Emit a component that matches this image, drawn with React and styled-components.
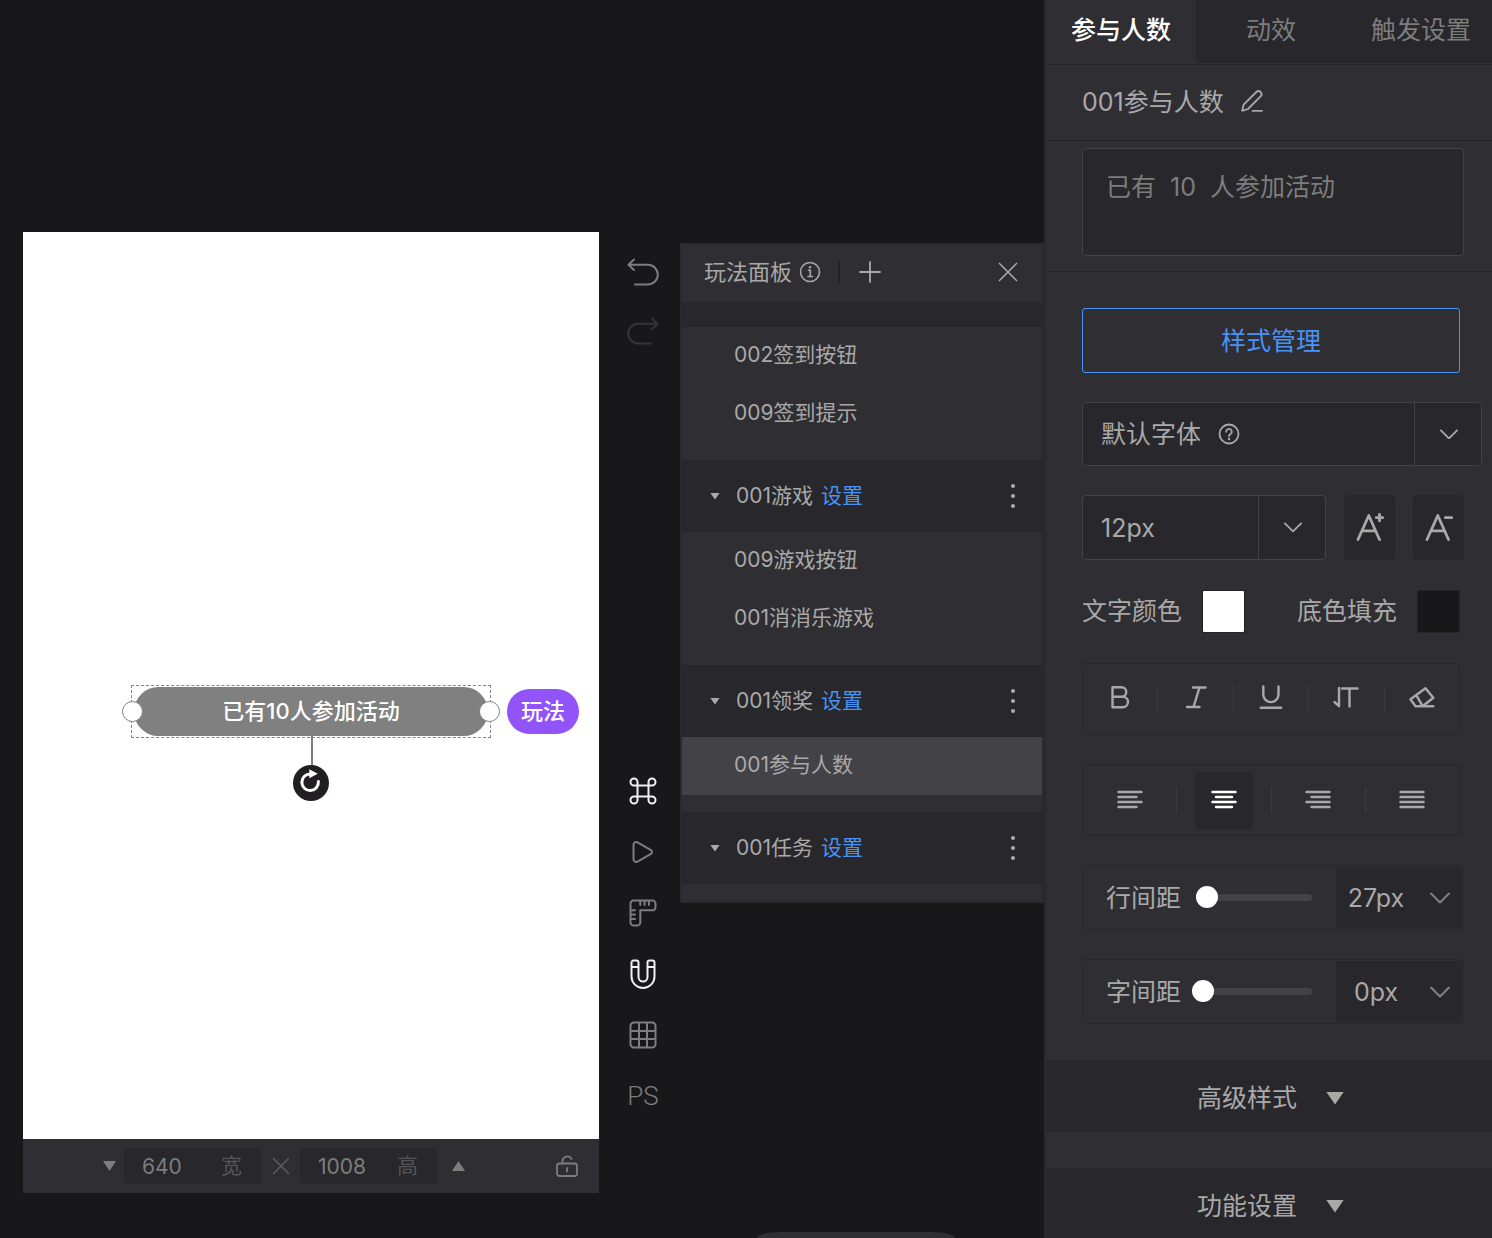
import { useState } from "react";
import styled, { createGlobalStyle, ThemeProvider } from "styled-components";

const theme = {
  bg: "#18181a",
  panel: "#2f2e33",
  panelDark: "#28272b",
  edge: "#2a292d",
  line: "#232226",
  border: "#434247",
  active: "#434247",
  text: "#a9a9a9",
  muted: "#7d7d7d",
  dim: "#555457",
  blue: "#4893f5",
  purple: "#9254f8",
};

const GlobalStyle = createGlobalStyle`
  *, *::before, *::after {
    box-sizing: border-box;
  }

  body {
    margin: 0;
    background: ${theme.bg};
  }

  body, button, input, select, textarea {
    font-family: Inter, "Noto Sans CJK SC", sans-serif;
  }

  button {
    padding: 0;
    border: 0;
    background: none;
    color: inherit;
    cursor: pointer;
  }

  h2, h3, p, ul {
    margin: 0;
    padding: 0;
    font-weight: 400;
    list-style: none;
  }
`;

const Page = styled.div`
  display: grid;
  grid-template-columns: minmax(0, 1fr) 448px;
  height: 100vh;
  overflow: hidden;
  color: ${({ theme }) => theme.text};
`;

// icons

const StrokeIcon = styled.svg`
  display: block;
  flex: none;
  fill: none;
  stroke: currentColor;
  stroke-width: ${({ $weight }) => $weight || 2};
  stroke-linecap: round;
  stroke-linejoin: round;

  .solid {
    fill: currentColor;
    stroke: none;
  }
`;

const Icon = ({ w = 28, h = w, weight, children }) => (
  <StrokeIcon
    width={w}
    height={h}
    viewBox={`0 0 ${w} ${h}`}
    $weight={weight}
    aria-hidden="true"
  >
    {children}
  </StrokeIcon>
);

const Chevron = ({ w = 18 }) => (
  <StrokeIcon width={w} height={w * 0.6} viewBox="0 0 20 12" aria-hidden="true">
    <path d="M1 1.5 10 10.5 19 1.5" />
  </StrokeIcon>
);

const Triangle = styled.span`
  flex: none;
  width: ${({ $w }) => $w}px;
  height: ${({ $h }) => $h}px;
  background: currentColor;
  clip-path: ${({ $up }) =>
    $up
      ? "polygon(50% 0, 100% 100%, 0 100%)"
      : "polygon(0 0, 100% 0, 50% 100%)"};
`;

// workspace

const Workspace = styled.main`
  position: relative;
  display: grid;
  grid-template-columns: minmax(0, 1fr) 81px 364px;
  padding: 232px 0 45px 23px;
  overflow: hidden;
`;

const Stage = styled.section`
  display: flex;
  flex-direction: column;
`;

const Canvas = styled.div`
  position: relative;
  flex: 1;
  background: #fff;
`;

const Selection = styled.div`
  position: absolute;
  top: 453px;
  left: 108px;
  width: 360px;
  height: 53px;
  padding: 1px;
  border: 1px dashed #858585;
`;

const CountPill = styled.p`
  height: 49px;
  margin: 0 1px;
  border-radius: 25px;
  background: #808080;
  color: #fff;
  font-size: 22px;
  font-weight: 500;
  line-height: 49px;
  text-align: center;
`;

const Handle = styled.span`
  position: absolute;
  top: 15px;
  ${({ $side }) => $side}: -10px;
  width: 21px;
  height: 21px;
  border: 1px solid #808080;
  border-radius: 50%;
  background: #fff;
`;

const Stem = styled.span`
  position: absolute;
  top: 50px;
  left: 179px;
  width: 2px;
  height: 32px;
  background: #808080;
`;

const Rotate = styled.button`
  position: absolute;
  top: 79px;
  left: 161px;
  width: 36px;
  height: 36px;
  border-radius: 50%;
  background: #221f22;
  color: #fff;
`;

const Tag = styled.span`
  position: absolute;
  top: 3px;
  left: 375px;
  width: 72px;
  height: 45px;
  border-radius: 23px;
  background: ${({ theme }) => theme.purple};
  color: #fff;
  font-size: 22px;
  font-weight: 500;
  line-height: 44px;
  text-align: center;
`;

const SizeBar = styled.div`
  display: flex;
  align-items: center;
  height: 54px;
  padding: 0 21px 0 80px;
  background: ${({ theme }) => theme.panel};
  color: ${({ theme }) => theme.muted};

  > button:last-child {
    margin-left: auto;
  }
`;

const StepButton = styled.button`
  display: flex;
  width: 13px;
  margin-right: ${({ $up }) => ($up ? 0 : 8)}px;
  margin-left: ${({ $up }) => ($up ? 15 : 0)}px;
`;

const Times = styled.span`
  display: grid;
  place-items: center;
  width: 39px;
  color: #5c5c60;
`;

const SizeField = styled.label`
  display: flex;
  align-items: center;
  width: 137px;
  height: 36px;
  padding: 0 19px 0 18px;
  border-radius: 4px;
  background: ${({ theme }) => theme.panelDark};
  font-size: 21px;

  input {
    flex: 1;
    min-width: 0;
    padding: 0;
    border: 0;
    background: none;
    color: inherit;
    font-size: 21px;
  }

  span {
    color: ${({ theme }) => theme.dim};
    line-height: 36px;
  }
`;

const Rail = styled.nav`
  display: flex;
  flex-direction: column;
  justify-content: space-between;
  align-items: center;
  padding: 10px 0 67px 7px;
`;

const RailGroup = styled.div`
  display: flex;
  flex-direction: column;
`;

const RailButton = styled.button`
  display: grid;
  place-items: center;
  width: 48px;
  height: ${({ $short }) => ($short ? 59 : 61)}px;
  color: ${({ theme, $state }) =>
    ({ on: "#f0f0f0", off: "#353535" })[$state] || theme.muted};
  font-family: Roboto, sans-serif;
  font-size: 26px;
  font-weight: 300;
`;

const BottomDrawer = styled.div`
  position: absolute;
  bottom: 0;
  left: 757px;
  width: 198px;
  height: 6px;
  border-radius: 24px 24px 0 0 / 6px 6px 0 0;
  background: ${({ theme }) => theme.panel};
`;

// play panel

const PlayPanel = styled.section`
  align-self: start;
  margin-top: 11px;
  border: 2px solid ${({ theme }) => theme.edge};
  background: ${({ theme }) => theme.panel};
`;

const PlayHeader = styled.header`
  display: flex;
  align-items: center;
  height: 57px;
  padding: 0 24px 3px 22px;

  h2 {
    margin-right: 7px;
    font-size: 22px;
    line-height: 54px;
  }

  > button:last-child {
    margin-left: auto;
  }
`;

const HeaderRule = styled.span`
  width: 2px;
  height: 22px;
  margin: 0 19px 0 17px;
  background: ${({ theme }) => theme.line};
`;

const Strip = styled.div`
  height: 25px;
  background: ${({ theme }) => theme.panelDark};
`;

const GroupHeader = styled.div`
  display: flex;
  align-items: center;
  height: 72px;
  padding: 0 24px 0 28px;
  background: ${({ theme }) => theme.panelDark};
  font-size: 21px;
  line-height: 72px;

  h3 {
    margin: 0 8px 0 16px;
    font-size: 21px;
  }

  a {
    color: ${({ theme }) => theme.blue};
    text-decoration: none;
  }

  > button:last-child {
    margin-left: auto;
  }
`;

const ItemList = styled.ul`
  padding-bottom: 17px;
`;

const Item = styled.button`
  display: block;
  width: 100%;
  height: 58px;
  padding: 0 0 2px 52px;
  background: ${({ theme, $active }) => ($active ? theme.active : "none")};
  font-size: 21px;
  line-height: 56px;
  text-align: left;
`;

// inspector

const Inspector = styled.aside`
  border-left: 2px solid ${({ theme }) => theme.edge};
  background: ${({ theme }) => theme.panel};
  font-size: 25px;
  overflow: hidden auto;
  scrollbar-width: none;
`;

const Tabs = styled.div`
  display: flex;
  height: 65px;
  padding-bottom: 1px;
  border-bottom: 1px solid ${({ theme }) => theme.line};
`;

const Tab = styled.button`
  flex: 0 0 150px;
  padding-bottom: 8px;
  background: ${({ theme, $active }) =>
    $active ? theme.panel : theme.panelDark};
  color: ${({ theme, $active }) => ($active ? "#fff" : theme.muted)};
  font-size: 25px;
  font-weight: ${({ $active }) => ($active ? 500 : 400)};
`;

const NameRow = styled.div`
  display: flex;
  align-items: center;
  height: 76px;
  padding: 0 28px 4px 36px;
  border-bottom: 1px solid ${({ theme }) => theme.line};

  h2 {
    margin-right: 17px;
    padding-bottom: 2px;
    font-size: 25px;
  }
`;

const TextRow = styled.div`
  padding: 7px 28px 15px 36px;
  border-bottom: 1px solid ${({ theme }) => theme.line};

  textarea {
    display: block;
    width: 100%;
    height: 108px;
    padding: 19px 23px;
    border: 1px solid ${({ theme }) => theme.border};
    border-radius: 4px;
    background: ${({ theme }) => theme.panelDark};
    color: ${({ theme }) => theme.muted};
    font-size: 25px;
    line-height: 38px;
    resize: none;
  }
`;

const StyleForm = styled.div`
  display: flex;
  flex-direction: column;
  gap: 29px;
  padding: 36px 32px 36px 36px;
`;

const ManageButton = styled.button`
  height: 65px;
  padding-bottom: 4px;
  border: 1px solid ${({ theme }) => theme.blue};
  border-radius: 3px;
  color: ${({ theme }) => theme.blue};
  font-size: 25px;
`;

const SelectBox = styled.div`
  position: relative;
  flex: 1;

  select {
    width: 100%;
    height: 100%;
    padding: 0 68px 0 18px;
    border: 1px solid ${({ theme }) => theme.border};
    border-radius: 4px;
    appearance: none;
    background: ${({ theme }) => theme.panelDark};
    color: inherit;
    font-size: 25px;
  }
`;

const SelectArrow = styled.span`
  position: absolute;
  inset: 1px 0 1px auto;
  display: grid;
  place-items: center;
  width: 68px;
  border-left: 1px solid ${({ theme }) => theme.border};
  pointer-events: none;
`;

// wider than its siblings on the right
const FontRow = styled.div`
  display: flex;
  height: 64px;
  margin-right: -22px;
`;

const HelpButton = styled.button`
  position: absolute;
  top: 21px;
  left: 136px;
`;

const SizeRow = styled.div`
  display: flex;
  gap: 18px;
  height: 65px;
  margin-right: -4px;
`;

const FontStep = styled.button`
  display: grid;
  place-items: center;
  width: 51px;
  padding-bottom: 2px;
  border-radius: 4px;
  background: ${({ theme }) => theme.panelDark};
`;

const ColorRow = styled.div`
  display: flex;
  justify-content: space-between;
`;

const ColorField = styled.label`
  display: flex;
  align-items: center;
  gap: 20px;
  line-height: 45px;

  input {
    width: 43px;
    height: 43px;
    padding: 0;
    border: 1px solid ${({ theme }) => theme.line};
    border-radius: 2px;
    appearance: none;
    background: none;
  }

  input::-webkit-color-swatch-wrapper {
    padding: 0;
  }

  input::-webkit-color-swatch {
    border: 0;
  }
`;

const ButtonBar = styled.div`
  display: flex;
  align-items: center;
  height: 72px;
  border: 1px solid ${({ theme }) => theme.panelDark};
  border-radius: 4px;
`;

const BarCell = styled.div`
  display: grid;
  flex: 1;
  place-items: center;
  height: 28px;

  & + & {
    border-left: 1px solid #3a393e;
  }
`;

const BarButton = styled.button`
  display: grid;
  place-items: center;
  width: 58px;
  height: 57px;
  margin: -15px 0;
  padding-bottom: 2px;
  background: ${({ theme, $active }) => ($active ? theme.panelDark : "none")};
  color: ${({ $active }) => ($active ? "#fff" : "inherit")};
`;

const SpacingRow = styled.div`
  display: flex;
  align-items: center;
  height: 65px;
  margin-right: -4px;
  padding: 0 1px 0 23px;
  border: 1px solid ${({ theme }) => theme.panelDark};
  border-radius: 4px;

  label {
    flex: none;
    margin-right: 11px;
    padding-bottom: 3px;
  }
`;

const Range = styled.input`
  flex: 1;
  min-width: 0;
  height: 22px;
  margin: 0 24px 0 0;
  appearance: none;
  background: none;

  &::-webkit-slider-runnable-track {
    height: 7px;
    border-radius: 4px;
    background: linear-gradient(to right, transparent 11px, #434247 11px);
  }

  &::-webkit-slider-thumb {
    width: 22px;
    height: 22px;
    margin-top: -8px;
    border-radius: 50%;
    appearance: none;
    background: #fff;
  }
`;

const UnitSelect = styled.div`
  position: relative;
  flex: none;
  width: 126px;
  height: 61px;

  select {
    width: 100%;
    height: 100%;
    padding: 0 46px 0 0;
    border: 0;
    border-radius: 2px;
    appearance: none;
    background: ${({ theme }) => theme.panelDark};
    color: inherit;
    font-size: 25px;
    text-align: center;
    text-align-last: center;
  }

  svg {
    position: absolute;
    top: 25px;
    right: 12px;
    opacity: 0.7;
    pointer-events: none;
  }
`;

const Fold = styled.button`
  display: flex;
  align-items: center;
  justify-content: center;
  gap: 29px;
  width: 100%;
  height: 72px;
  margin-bottom: 36px;
  padding-left: 3px;
  background: ${({ theme }) => theme.panelDark};
  font-size: 25px;

  &:last-child {
    margin-bottom: 0;
  }

  span {
    margin-top: 4px;
  }
`;

const tools = [
  {
    label: "组件",
    state: "on",
    icon: (
      <path d="M19.5 5v18a3.5 3.5 0 1 0 3.5-3.5H5A3.5 3.5 0 1 0 8.5 23V5A3.5 3.5 0 1 0 5 8.5h18A3.5 3.5 0 1 0 19.5 5z" />
    ),
  },
  {
    label: "预览",
    icon: (
      <path d="M4.5 7v14c0 2.6 2.3 3.6 4.5 2.4l12.6-7.3c1.9-1.1 1.9-3.1 0-4.2L9 4.6C6.8 3.4 4.5 4.4 4.5 7z" />
    ),
  },
  {
    label: "标尺",
    icon: (
      <>
        <path d="M4.5 1.5h19a3 3 0 0 1 3 3v3.8a3 3 0 0 1-3 3H11.3v12.2a3 3 0 0 1-3 3H4.5a3 3 0 0 1-3-3v-19a3 3 0 0 1 3-3z" />
        <path d="M11.3 2v4M15.6 2v4M19.9 2v4M2 11.3h4M2 15.6h4M2 19.9h4" />
      </>
    ),
  },
  {
    label: "吸附",
    state: "on",
    height: 30,
    icon: (
      <path d="M2.5 3.5a2 2 0 0 1 2-2h3a2 2 0 0 1 2 2V18a4.5 4.5 0 0 0 9 0V3.5a2 2 0 0 1 2-2h3a2 2 0 0 1 2 2v14a11.5 11.5 0 0 1-23 0zM2.5 8h7M18.5 8h7" />
    ),
  },
  {
    label: "网格",
    icon: (
      <>
        <rect x="1.5" y="1.5" width="25" height="25" rx="3.5" />
        <path d="M10 2v24M18 2v24M2 10h24M2 18h24" />
      </>
    ),
  },
];

const groups = [
  { title: "001游戏", items: ["009游戏按钮", "001消消乐游戏"] },
  { title: "001领奖", items: ["001参与人数"] },
  { title: "001任务", items: [] },
];

const textStyles = [
  {
    label: "加粗",
    d: "M5.5 2.2h9a4.8 4.8 0 0 1 0 9.6h-9zM5.5 11.8h10.3a5.2 5.2 0 0 1 0 10.4H5.5z",
  },
  { label: "斜体", d: "M10 2.5h12.5M4 22h12.5M16.5 2.5l-6 19.5" },
  {
    label: "下划线",
    d: "M5.3 1.5v8a7.6 7.6 0 0 0 15.2 0v-8M2.8 22.7h20.4",
  },
  { label: "竖排", d: "M6 3v18.2L1.5 17M9 3.5h15.5M16.5 3.5v18" },
  {
    label: "清除格式",
    d: "M1.5 14.2 16.5 3.2l7.8 9.6-10.6 8.5H6.5zM7.3 10.2l6.4 11.1h10.6",
  },
];

const alignments = [
  { label: "左对齐", d: "M1.5 2h23M1.5 7h18M1.5 12h23M1.5 17h18" },
  { label: "居中", d: "M1.5 2h23M5 7h16M1.5 12h23M5 17h16" },
  { label: "右对齐", d: "M1.5 2h23M6.5 7h18M1.5 12h23M6.5 17h18" },
  { label: "两端对齐", d: "M1.5 2h23M1.5 7h23M1.5 12h23M1.5 17h23" },
];

const StageArea = () => (
  <Stage>
    <Canvas>
      <Selection>
        <CountPill>已有10人参加活动</CountPill>
        <Stem />
        <Handle $side="left" />
        <Handle $side="right" />
        <Rotate aria-label="旋转">
          <Icon w={36} weight={3}>
            <path d="M25.4 16.5a8.3 8.3 0 1 1-8-7.6" />
            <path className="solid" d="M16.3 4.3 24.7 8.7l-8.4 4.6z" />
          </Icon>
        </Rotate>
        <Tag>玩法</Tag>
      </Selection>
    </Canvas>
    <SizeBar>
      <StepButton aria-label="减小">
        <Triangle $w={13} $h={10} />
      </StepButton>
      <SizeField>
        <input defaultValue="640" />
        <span>宽</span>
      </SizeField>
      <Times>
        <Icon w={18} weight={1.5}>
          <path d="M1.5 1.5l15 15M16.5 1.5l-15 15" />
        </Icon>
      </Times>
      <SizeField>
        <input defaultValue="1008" />
        <span>高</span>
      </SizeField>
      <StepButton $up aria-label="增大">
        <Triangle $w={13} $h={10} $up />
      </StepButton>
      <button aria-label="锁定比例">
        <Icon w={22} h={22} weight={1.8}>
          <rect x="1" y="8.5" width="20" height="12.5" rx="2.5" />
          <path d="M6.5 8.5V6a4.8 4.8 0 0 1 9-2M11 13v3.5" />
        </Icon>
      </button>
    </SizeBar>
  </Stage>
);

const ToolRail = () => (
  <Rail>
    <RailGroup>
      <RailButton $short aria-label="撤销">
        <Icon w={32} h={28}>
          <path d="M7 1.5 1.5 6.8 7 12M1.5 6.8H21a9.7 9.7 0 0 1 0 19.6H8" />
        </Icon>
      </RailButton>
      <RailButton $short $state="off" aria-label="重做">
        <Icon w={32} h={28}>
          <path d="M25 1.5l5.5 5.3L25 12M30.5 6.8H11a9.7 9.7 0 0 0 0 19.6h13" />
        </Icon>
      </RailButton>
    </RailGroup>
    <RailGroup>
      {tools.map(({ label, state, height, icon }) => (
        <RailButton key={label} $state={state} aria-label={label}>
          <Icon w={28} h={height}>
            {icon}
          </Icon>
        </RailButton>
      ))}
      <RailButton>PS</RailButton>
    </RailGroup>
  </Rail>
);

const Items = ({ items, selected, onSelect }) => (
  <ItemList>
    {items.map((item) => (
      <li key={item}>
        <Item $active={item === selected} onClick={() => onSelect(item)}>
          {item}
        </Item>
      </li>
    ))}
  </ItemList>
);

const Plays = () => {
  const [selected, setSelected] = useState("001参与人数");

  return (
    <PlayPanel>
      <PlayHeader>
        <h2>玩法面板</h2>
        <button aria-label="说明">
          <Icon w={22} weight={1.6}>
            <circle cx="11" cy="11" r="9.5" />
            <path d="M9.5 9.3h1.8v6M9 15.5h4.5" />
            <circle className="solid" cx="11" cy="6.3" r="1.2" />
          </Icon>
        </button>
        <HeaderRule />
        <button aria-label="添加">
          <Icon w={22} weight={1.8}>
            <path d="M11 1v20M1 11h20" />
          </Icon>
        </button>
        <button aria-label="关闭">
          <Icon w={20} weight={1.6}>
            <path d="M1.5 1.5l17 17M18.5 1.5l-17 17" />
          </Icon>
        </button>
      </PlayHeader>
      <Strip />
      <Items
        items={["002签到按钮", "009签到提示"]}
        selected={selected}
        onSelect={setSelected}
      />
      {groups.map(({ title, items }) => (
        <div key={title}>
          <GroupHeader>
            <Triangle $w={10} $h={7} />
            <h3>{title}</h3>
            <a href="#settings">设置</a>
            <button aria-label="更多">
              <Icon w={10} h={26}>
                <circle className="solid" cx="5" cy="3" r="2.1" />
                <circle className="solid" cx="5" cy="13" r="2.1" />
                <circle className="solid" cx="5" cy="23" r="2.1" />
              </Icon>
            </button>
          </GroupHeader>
          <Items items={items} selected={selected} onSelect={setSelected} />
        </div>
      ))}
    </PlayPanel>
  );
};

const Spacing = ({ id, label, value, unit }) => (
  <SpacingRow>
    <label htmlFor={id}>{label}</label>
    <Range id={id} type="range" min="0" max="100" defaultValue={value} />
    <UnitSelect>
      <select aria-label={label}>
        <option>{unit}</option>
      </select>
      <Chevron w={20} />
    </UnitSelect>
  </SpacingRow>
);

const Properties = () => {
  const [align, setAlign] = useState("居中");

  return (
    <Inspector>
      <Tabs>
        <Tab $active>参与人数</Tab>
        <Tab>动效</Tab>
        <Tab>触发设置</Tab>
      </Tabs>
      <NameRow>
        <h2>001参与人数</h2>
        <button aria-label="重命名">
          <Icon w={22} weight={1.8}>
            <path d="M1.2 20.8 2.6 14.6 15.4 2a3 3 0 0 1 4.2 4.3L7 19zM11.5 20.8H21" />
          </Icon>
        </button>
      </NameRow>
      <TextRow>
        <textarea aria-label="文案" defaultValue="已有  10  人参加活动" />
      </TextRow>
      <StyleForm>
        <ManageButton>样式管理</ManageButton>
        <FontRow>
          <SelectBox>
            <select aria-label="字体">
              <option>默认字体</option>
            </select>
            <HelpButton aria-label="字体说明">
              <Icon w={22} weight={1.8}>
                <circle cx="11" cy="11" r="9.5" />
                <path d="M8.2 8.7a2.8 2.8 0 1 1 4.3 2.4c-1 .6-1.5 1-1.5 2.1" />
                <circle className="solid" cx="11" cy="16" r="1.2" />
              </Icon>
            </HelpButton>
            <SelectArrow>
              <Chevron />
            </SelectArrow>
          </SelectBox>
        </FontRow>
        <SizeRow>
          <SelectBox>
            <select aria-label="字号">
              <option>12px</option>
            </select>
            <SelectArrow>
              <Chevron />
            </SelectArrow>
          </SelectBox>
          <FontStep aria-label="增大字号">
            <Icon w={28} h={30} weight={2.8}>
              <path d="M2 27.5 12.8 3.5 23.5 27.5M6.5 18.8h12.6M23.5 2.5v6.4M20.3 5.7h6.4" />
            </Icon>
          </FontStep>
          <FontStep aria-label="减小字号">
            <Icon w={28} h={30} weight={2.8}>
              <path d="M2 27.5 12.8 3.5 23.5 27.5M6.5 18.8h12.6M20.3 5.7h6.4" />
            </Icon>
          </FontStep>
        </SizeRow>
        <ColorRow>
          <ColorField>
            文字颜色
            <input type="color" defaultValue="#ffffff" />
          </ColorField>
          <ColorField>
            底色填充
            <input type="color" defaultValue="#18181a" />
          </ColorField>
        </ColorRow>
        <ButtonBar>
          {textStyles.map(({ label, d }) => (
            <BarCell key={label}>
              <BarButton aria-label={label}>
                <Icon w={26} weight={2.4}>
                  <path d={d} />
                </Icon>
              </BarButton>
            </BarCell>
          ))}
        </ButtonBar>
        <ButtonBar>
          {alignments.map(({ label, d }) => (
            <BarCell key={label}>
              <BarButton
                aria-label={label}
                $active={label === align}
                onClick={() => setAlign(label)}
              >
                <Icon w={26} h={19} weight={2.4}>
                  <path d={d} />
                </Icon>
              </BarButton>
            </BarCell>
          ))}
        </ButtonBar>
        <Spacing id="line-gap" label="行间距" value={4} unit="27px" />
        <Spacing id="letter-gap" label="字间距" value={0} unit="0px" />
      </StyleForm>
      <Fold>
        高级样式
        <Triangle $w={18} $h={13} />
      </Fold>
      <Fold>
        功能设置
        <Triangle $w={18} $h={13} />
      </Fold>
    </Inspector>
  );
};

export default function App() {
  return (
    <ThemeProvider theme={theme}>
      <GlobalStyle />
      <Page>
        <Workspace>
          <StageArea />
          <ToolRail />
          <Plays />
          <BottomDrawer />
        </Workspace>
        <Properties />
      </Page>
    </ThemeProvider>
  );
}
